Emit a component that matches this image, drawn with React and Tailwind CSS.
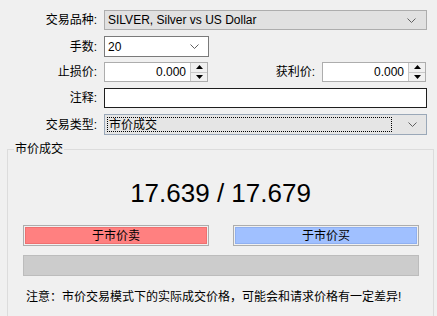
import React from "react";

const Chevron = () => (
  <svg width="9" height="5" viewBox="0 0 9 5" className="block">
    <path d="M0.5 0.5 L4.5 4.5 L8.5 0.5" fill="none" stroke="#606060" strokeWidth="1" />
  </svg>
);

const Spinner = () => (
  <div className="flex flex-col w-[17px] h-full border-l border-[#c8c8c8] bg-[#f0f0f0]">
    <div className="flex-1 flex items-center justify-center border-b border-[#c8c8c8]">
      <svg width="7" height="4" viewBox="0 0 7 4" className="block">
        <path d="M0 4 L3.5 0 L7 4 Z" fill="#000" />
      </svg>
    </div>
    <div className="flex-1 flex items-center justify-center">
      <svg width="7" height="4" viewBox="0 0 7 4" className="block">
        <path d="M0 0 L3.5 4 L7 0 Z" fill="#000" />
      </svg>
    </div>
  </div>
);

const Label = ({ children, w = "w-[97px]" }) => (
  <div className={`${w} text-right shrink-0`}>{children}</div>
);

export default function App() {
  return (
    <div
      className="w-[437px] h-[316px] bg-[#f0f0f0] overflow-hidden text-[12px] leading-none text-black"
      style={{ fontFamily: '"Liberation Sans", "Noto Sans CJK SC", sans-serif' }}
    >
      <div className="pt-[10px] flex flex-col">
        {/* Row 1 */}
        <div className="flex items-center h-[20px]">
          <Label>交易品种:</Label>
          <div className="ml-[7px] w-[323px] h-[20px] bg-[#e1e1e1] border border-[#adadad] flex items-center pl-[3px] pr-[10px]">
            <span className="flex-1">SILVER, Silver vs US Dollar</span>
            <Chevron />
          </div>
        </div>
        {/* Row 2 */}
        <div className="flex items-center h-[21px] mt-[6px]">
          <Label>手数:</Label>
          <div className="ml-[7px] w-[105px] h-[21px] bg-white border border-[#7a7a7a] flex items-center pl-[3px] pr-[9px]">
            <span className="flex-1">20</span>
            <Chevron />
          </div>
        </div>
        {/* Row 3 */}
        <div className="flex items-center h-[20px] mt-[5px]">
          <Label>止损价:</Label>
          <div className="ml-[7px] w-[104px] h-[20px] bg-white border border-[#adadad] flex items-center">
            <span className="flex-1 text-right pr-[4px]">0.000</span>
            <Spinner />
          </div>
          <Label w="w-[107px]">获利价:</Label>
          <div className="ml-[7px] w-[104px] h-[20px] bg-white border border-[#adadad] flex items-center">
            <span className="flex-1 text-right pr-[4px]">0.000</span>
            <Spinner />
          </div>
        </div>
        {/* Row 4 */}
        <div className="flex items-center h-[20px] mt-[6px]">
          <Label>注释:</Label>
          <div className="ml-[7px] w-[323px] h-[20px] bg-white border border-[#1e1e1e]" />
        </div>
        {/* Row 5 */}
        <div className="flex items-center h-[21px] mt-[6px]">
          <Label>交易类型:</Label>
          <div className="ml-[7px] w-[323px] h-[21px] bg-[#e5e5e5] border border-[#9aa8b8] flex items-center pl-[2px] pr-[9px]">
            <div className="flex-1 h-[15px] border border-dotted border-black flex items-center pl-[1px] mr-[16px]">
              市价成交
            </div>
            <Chevron />
          </div>
        </div>

        {/* Group */}
        <div className="relative mt-[14px] mx-[7px] w-[427px] h-[180px] border-t border-l border-r border-[#dcdcdc]">
          <div className="absolute left-[6px] top-[-7px] px-[1px] bg-[#f0f0f0]">市价成交</div>
          <div className="flex flex-col items-center">
            <div className="mt-[30px] h-[26px] flex items-center text-[26px]">17.639 / 17.679</div>
            <div className="mt-[19px] w-full pl-[15px] flex gap-[24px]">
              <div className="w-[186px] h-[21px] border border-[#adadad] p-[1px]">
                <div className="w-full h-full bg-[#ff8080] border border-[#ef7070] flex items-center justify-center">于市价卖</div>
              </div>
              <div className="w-[186px] h-[21px] border border-[#adadad] p-[1px]">
                <div className="w-full h-full bg-[#a0c0ff] border border-[#90b0f0] flex items-center justify-center">于市价买</div>
              </div>
            </div>
            <div className="mt-[9px] ml-[15px] self-start w-[396px] h-[21px] bg-[#cccccc] border border-[#bcbcbc]" />
            <div className="mt-[15px] ml-[18px] self-start">注意：市价交易模式下的实际成交价格，可能会和请求价格有一定差异!</div>
          </div>
        </div>
      </div>
    </div>
  );
}
